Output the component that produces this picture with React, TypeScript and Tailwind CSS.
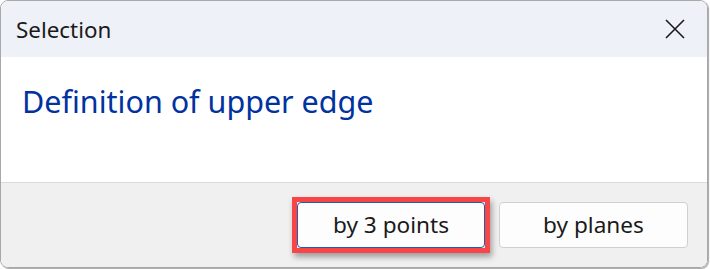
import React from "react";

export default function App() {
  return (
    <div className="w-[710px] h-[269px] bg-white" style={{ fontFamily: '"Noto Sans", "Open Sans", sans-serif' }}>
      <div className="w-[708px] h-[268px] rounded-[8px] border border-[#a8a8a8] shadow-[1px_1px_1px_rgba(0,0,0,0.35)] overflow-hidden flex flex-col">
        <div className="h-[56px] bg-[#eff1f8] flex items-center justify-between pl-[15px] pr-[22px] shrink-0">
          <span className="text-[22.4px] text-[#1a1a1a] leading-none mt-[3px]">Selection</span>
          <svg width="20" height="20" viewBox="0 0 20 20" className="shrink-0">
            <path d="M1 1 L19 19 M19 1 L1 19" stroke="#1a1a1a" strokeWidth="1.6" fill="none" />
          </svg>
        </div>
        <div className="h-[126px] bg-white border-b border-[#dadada] px-[21px] pt-[24px] shrink-0">
          <div className="text-[30.5px] leading-[40px] text-[#0033a0]">Definition of upper edge</div>
        </div>
        <div className="flex-1 bg-[#f0f0f0] flex items-center justify-end gap-[9px] pr-[19px]">
          <div className="border-[5px] border-[#f84646] shadow-[2px_4px_6px_rgba(0,0,0,0.35)]">
            <button className="block w-[188px] h-[46px] rounded-[4px] bg-[#fdfdfd] border border-[#1a5fb4] text-[22.6px] text-[#1a1a1a] leading-none">
              by 3 points
            </button>
          </div>
          <button className="w-[189px] h-[46px] rounded-[4px] bg-[#fdfdfd] border border-[#d0d0d0] text-[22.6px] text-[#1a1a1a] leading-none">
            by planes
          </button>
        </div>
      </div>
    </div>
  );
}
